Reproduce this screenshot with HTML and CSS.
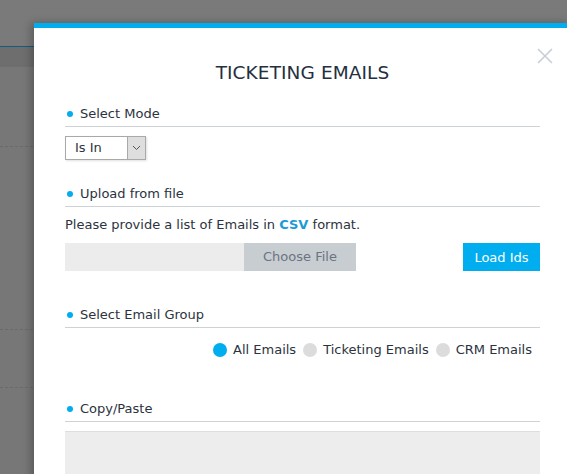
FILE: index.html
```html
<!DOCTYPE html>
<html>
<head>
<meta charset="utf-8">
<link rel="stylesheet" href="styles.css">
</head>
<body>
<div class="page">
  <div class="page-header"></div>
  <div class="page-subbar"></div>
  <div class="page-body">
    <div class="page-row r1"></div>
    <div class="page-row r2"></div>
    <div class="page-row r3"></div>
  </div>
</div>

<div class="modal">
  <div class="close">
    <svg width="16" height="16" viewBox="0 0 16 16"><path d="M1 1L15 15M15 1L1 15" stroke="#c8ced5" stroke-width="1.6" fill="none"/></svg>
  </div>
  <h1 class="title">TICKETING EMAILS</h1>

  <div class="section-title s-mode">Select Mode</div>
  <div class="select">
    <span class="select-value">Is In</span>
    <span class="select-arrow">
      <svg width="9" height="6" viewBox="0 0 9 6"><path d="M1 1L4.5 4.5L8 1" stroke="#555" stroke-width="1" fill="none"/></svg>
    </span>
  </div>

  <div class="section-title s-upload">Upload from file</div>
  <p class="hint">Please provide a list of Emails in <b class="csv">CSV</b> format.</p>
  <div class="file-row">
    <div class="file-input">
      <span class="file-name"></span>
      <span class="file-btn">Choose File</span>
    </div>
    <button class="load-btn">Load Ids</button>
  </div>

  <div class="section-title s-group">Select Email Group</div>
  <div class="radios">
    <label class="radio"><span class="dot on"></span>All Emails</label>
    <label class="radio"><span class="dot"></span>Ticketing Emails</label>
    <label class="radio"><span class="dot"></span>CRM Emails</label>
  </div>

  <div class="section-title s-copy">Copy/Paste</div>
  <div class="textarea"></div>
</div>
</body>
</html>
```

FILE: styles.css
```css
html, body {
  margin: 0;
  padding: 0;
  width: 567px;
  height: 474px;
  overflow: hidden;
  background: #767676;
  font-family: "DejaVu Sans", Verdana, sans-serif;
}

.page {
  display: flex;
  flex-direction: column;
  height: 474px;
}
.page-header {
  height: 46px;
  background: #7a7a7a;
  border-bottom: 1px solid #0f5f7e;
}
.page-subbar {
  height: 20px;
  background: #6e6e6e;
}
.page-body {
  flex: 1;
  background: #777777;
}
.page-row {
  border-bottom: 1px dashed #6a6a6a;
}
.r1 { height: 79px; }
.r2 { height: 182px; }
.r3 { height: 57px; }

.modal {
  position: absolute;
  left: 34px;
  top: 23px;
  width: 475px;
  height: 460px;
  padding: 0 31px;
  background: #fff;
  border-top: 5px solid #00aeef;
  box-shadow: -3px 0 8px rgba(0,0,0,0.25);
}

.close {
  position: absolute;
  right: 18px;
  top: 20px;
  width: 16px;
  height: 16px;
}
.close svg { display: block; }

.title {
  margin: 33px 0 0;
  font-weight: normal;
  font-size: 18.5px;
  line-height: 24px;
  color: #24303f;
  text-align: center;
  letter-spacing: 0.1px;
}

.section-title {
  position: relative;
  margin-top: 14px;
  height: 16px;
  padding: 0 0 4px 15px;
  border-bottom: 1px solid #cdd2d7;
  font-size: 13px;
  line-height: 16px;
  color: #2c3340;
}
.section-title::before {
  content: "";
  position: absolute;
  left: 2px;
  top: 5px;
  width: 6px;
  height: 6px;
  border-radius: 50%;
  background: #00aeef;
}
.s-mode { margin-top: 21px; }

.select {
  margin-top: 9px;
  width: 79px;
  height: 22px;
  border: 1px solid #a9a9a9;
  display: flex;
  box-shadow: 1px 1px 2px rgba(0,0,0,0.12);
}
.select-value {
  flex: 1;
  padding-left: 9px;
  font-size: 13px;
  line-height: 22px;
  color: #2c3340;
}
.select-arrow {
  width: 17px;
  border-left: 1px solid #a9a9a9;
  background: #dedede;
  display: flex;
  align-items: center;
  justify-content: center;
}
.select-arrow svg { display: block; }

.s-upload { margin-top: 26px; }

.hint {
  margin: 10px 0 0;
  font-size: 13px;
  line-height: 16px;
  color: #2c3340;
}
.csv {
  color: #1a9ad6;
}

.file-row {
  margin-top: 10px;
  display: flex;
  justify-content: space-between;
  height: 28px;
}
.file-input {
  display: flex;
  width: 291px;
}
.file-name {
  width: 179px;
  background: #ececec;
}
.file-btn {
  flex: 1;
  background: #c8cdd2;
  color: #6b7480;
  font-size: 13px;
  line-height: 28px;
  text-align: center;
}
.load-btn {
  width: 77px;
  height: 28px;
  border: none;
  padding: 0;
  background: #00aeef;
  color: #fff;
  font-family: "DejaVu Sans", Verdana, sans-serif;
  font-size: 13px;
}

.s-group { margin-top: 36px; }

.radios {
  margin-top: 14px;
  display: flex;
  justify-content: flex-end;
  gap: 7px;
  padding-right: 8px;
}
.radio {
  display: flex;
  align-items: center;
  gap: 6px;
  font-size: 13px;
  line-height: 16px;
  color: #2c3340;
}
.dot {
  width: 14px;
  height: 14px;
  border-radius: 50%;
  background: #dcdcdc;
}
.dot.on { background: #00aeef; }

.s-copy { margin-top: 43px; }

.textarea {
  margin-top: 9px;
  height: 60px;
  background: #ededed;
  border-top: 1px solid #dedede;
}
```
